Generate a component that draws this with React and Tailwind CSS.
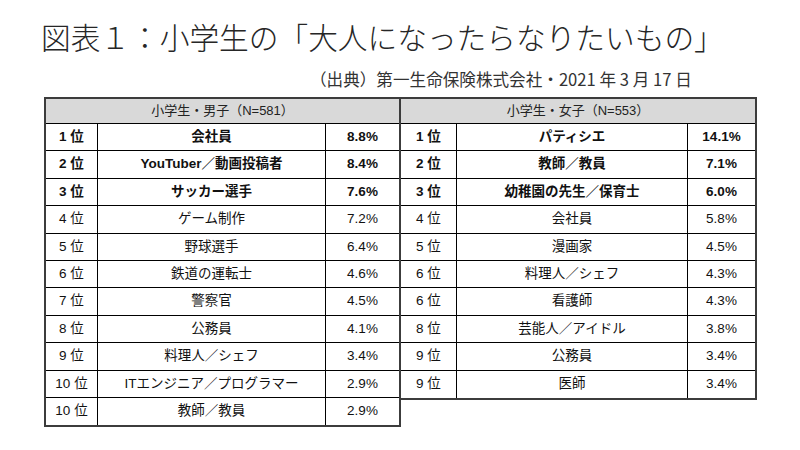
import React from "react";

const boys = [
  ["1 位", "会社員", "8.8%", true],
  ["2 位", "YouTuber／動画投稿者", "8.4%", true],
  ["3 位", "サッカー選手", "7.6%", true],
  ["4 位", "ゲーム制作", "7.2%", false],
  ["5 位", "野球選手", "6.4%", false],
  ["6 位", "鉄道の運転士", "4.6%", false],
  ["7 位", "警察官", "4.5%", false],
  ["8 位", "公務員", "4.1%", false],
  ["9 位", "料理人／シェフ", "3.4%", false],
  ["10 位", "ITエンジニア／プログラマー", "2.9%", false],
  ["10 位", "教師／教員", "2.9%", false],
];

const girls = [
  ["1 位", "パティシエ", "14.1%", true],
  ["2 位", "教師／教員", "7.1%", true],
  ["3 位", "幼稚園の先生／保育士", "6.0%", true],
  ["4 位", "会社員", "5.8%", false],
  ["5 位", "漫画家", "4.5%", false],
  ["6 位", "料理人／シェフ", "4.3%", false],
  ["6 位", "看護師", "4.3%", false],
  ["8 位", "芸能人／アイドル", "3.8%", false],
  ["9 位", "公務員", "3.4%", false],
  ["9 位", "医師", "3.4%", false],
];

function Table({ title, rows, side }) {
  const outer =
    side === "left"
      ? "w-[357px] border-2 border-[#3c3c3c]"
      : "w-[356px] border-2 border-l-0 border-[#3c3c3c]";
  const rankW = side === "left" ? "w-[52px]" : "w-[56px]";
  const pctW = side === "left" ? "w-[73px]" : "w-[67px]";
  return (
    <div className={outer}>
      <div className="h-[25px] bg-[#d9d9d9] border-b border-black flex items-center justify-center text-[13px] text-[#222]">
        {title}
      </div>
      {rows.map((r, i) => (
        <div
          key={i}
          className={
            "flex h-[27.4px] text-[13.5px] text-[#111] " +
            (i < rows.length - 1 ? "border-b border-black " : "") +
            (r[3] ? "font-bold" : "font-normal")
          }
        >
          <div className={rankW + " shrink-0 border-r border-black flex items-center justify-center"}>
            {r[0]}
          </div>
          <div className="flex-1 border-r border-black flex items-center justify-center whitespace-nowrap">
            {r[1]}
          </div>
          <div className={pctW + " shrink-0 flex items-center justify-center"}>
            {r[2]}
          </div>
        </div>
      ))}
    </div>
  );
}

export default function App() {
  return (
    <div
      className="w-[800px] h-[450px] bg-white overflow-hidden"
      style={{ fontFamily: '"Liberation Sans", "Noto Sans CJK JP", sans-serif' }}
    >
      <div
        className="pt-[22px] pl-[41px] text-[29.7px] leading-[29px] font-light text-[#262626] whitespace-nowrap"
        style={{ fontFamily: '"Noto Sans CJK JP", sans-serif' }}
      >
        図表１：小学生の「大人になったらなりたいもの」
      </div>
      <div
        className="mt-[20px] pl-[310px] text-[16.6px] leading-[16px] text-[#333] whitespace-nowrap"
        style={{ fontFamily: '"Noto Sans CJK JP", sans-serif' }}
      >
        （出典）第一生命保険株式会社・2021 年 3 月 17 日
      </div>
      <div className="mt-[10px] pl-[44px] flex items-start">
        <Table title="小学生・男子（N=581）" rows={boys} side="left" />
        <Table title="小学生・女子（N=553）" rows={girls} side="right" />
      </div>
    </div>
  );
}
